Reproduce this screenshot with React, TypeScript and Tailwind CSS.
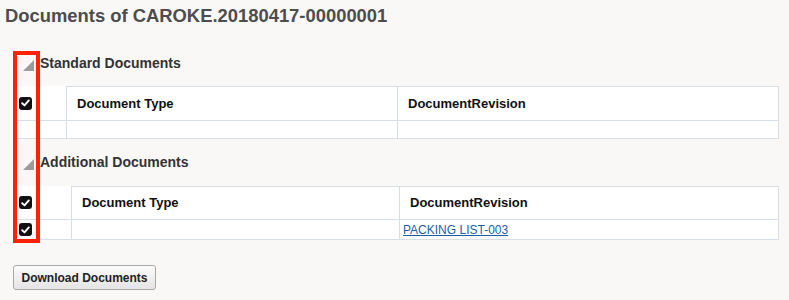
const FONT = { fontFamily: '"Liberation Sans", Arial, sans-serif' };

function Check() {
  return (
    <span className="inline-flex w-[13px] h-[13px] rounded-[3px] bg-[#111] items-center justify-center">
      <svg width="9" height="8" viewBox="0 0 9 8">
        <path d="M1.2 4.2 L3.5 6.4 L7.8 1.4" fill="none" stroke="#fff" strokeWidth="1.9" strokeLinecap="round" strokeLinejoin="round" />
      </svg>
    </span>
  );
}

function SectionHeader({ title }: { title: string }) {
  return (
    <div className="h-[26px] flex items-center">
      <div className="w-[27px] pl-[10px] pt-[5px]">
        <svg width="11" height="11" viewBox="0 0 11 11">
          <polygon points="11,0 11,11 0,11" fill="#9b9b9b" />
        </svg>
      </div>
      <span className="text-[14px] font-bold text-[#333]">{title}</span>
    </div>
  );
}

interface TableProps {
  cols: [number, number, number];
  headerH: number;
  rowH: number;
  headerCheck: boolean;
  rowCheck: boolean;
  link?: string;
}

function DocTable({ cols, headerH, rowH, headerCheck, rowCheck, link }: TableProps) {
  const line = 'border-[#d7dee6]';
  return (
    <div className="bg-white" style={{ width: cols[0] + cols[1] + cols[2] }}>
      <div className="flex" style={{ height: headerH }}>
        <div className={`border-b ${line} flex items-center pl-[6px]`} style={{ width: cols[0] }}>
          {headerCheck && <Check />}
        </div>
        <div className={`border-t border-l border-b ${line} flex items-center pl-[10px] text-[13px] font-bold text-[#111]`} style={{ width: cols[1] }}>
          Document Type
        </div>
        <div className={`border-t border-l border-r border-b ${line} flex items-center pl-[10px] text-[13px] font-bold text-[#111]`} style={{ width: cols[2] }}>
          DocumentRevision
        </div>
      </div>
      <div className="flex" style={{ height: rowH }}>
        <div className={`border-b ${line} flex items-center pl-[6px]`} style={{ width: cols[0] }}>
          {rowCheck && <Check />}
        </div>
        <div className={`border-l border-b ${line}`} style={{ width: cols[1] }} />
        <div className={`border-l border-r border-b ${line} flex items-center pl-[3px]`} style={{ width: cols[2] }}>
          {link && (
            <a href="#" className="text-[12px] text-[#1d5fa6] underline leading-none">
              {link}
            </a>
          )}
        </div>
      </div>
    </div>
  );
}

export default function App() {
  return (
    <div className="relative w-[789px] h-[300px] bg-[#f9f8f6] overflow-hidden" style={FONT}>
      <div className="h-[32px] flex items-center pl-[5px] text-[18.4px] font-bold text-[#4d4d4d]">
        Documents of CAROKE.20180417-00000001
      </div>

      <div className="pl-[13px]">
        <div className="mt-[18px]">
          <SectionHeader title="Standard Documents" />
        </div>
        <div className="mt-[10px]">
          <DocTable cols={[53, 331, 382]} headerH={35} rowH={18} headerCheck rowCheck={false} />
        </div>

        <div className="mt-[10px]">
          <SectionHeader title="Additional Documents" />
        </div>
        <div className="mt-[11px]">
          <DocTable cols={[58, 328, 380]} headerH={34} rowH={20} headerCheck rowCheck link="PACKING LIST-003" />
        </div>

        <button className="mt-[25px] h-[25px] w-[143px] border border-[#a8a8a8] rounded-[3px] bg-gradient-to-b from-[#fcfcfc] to-[#e4e4e4] text-[12px] font-bold text-[#222]">
          Download Documents
        </button>
      </div>

      {/* annotation box over the checkbox column */}
      <div className="absolute left-[13px] top-[51px] w-[27px] h-[192px] border-4 border-[#ff2200]" />
    </div>
  );
}
